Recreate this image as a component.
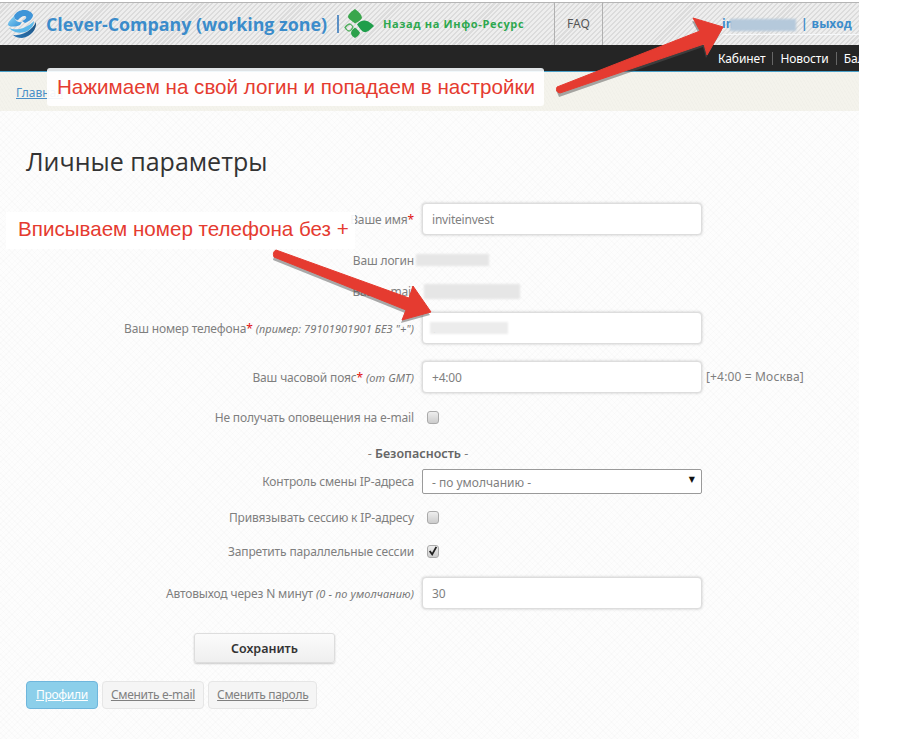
<div class="page">
  <header class="top">
    <a class="brand" href="#top">
      <svg class="logo" width="30" height="28" viewBox="0 0 30 28">
        <defs>
          <linearGradient id="sky" x1="0" y1="0" x2="1" y2="1">
            <stop offset="0" stop-color="#8fd6f5" />
            <stop offset="1" stop-color="#2f8fd6" />
          </linearGradient>
          <linearGradient id="deep" x1="0" y1="1" x2="1" y2="0">
            <stop offset="0" stop-color="#2a78b8" />
            <stop offset="1" stop-color="#1d4f7c" />
          </linearGradient>
        </defs>
        <path d="M7 6 C9 2 13 0 17 0 C21 0 25 2 26 5 C26 8 23 11 18 13 L15 11 C18 9.5 20 8 19 6.5 C17 5 13 7 11 10 C8 10 7 8 7 6 Z" fill="#3f95d8" />
        <path d="M7 6 C5 9 1 11 1 15 C3 17 8 17 13 15 L15 12 C11 13 8 11 7 6 Z" fill="url(#sky)" />
        <path d="M2 18 C9 21 19 19 27 11 C27 16 23 20 18 22 C12 24 6 22 2 18 Z" fill="#5bb8ea" />
        <path d="M29 12 C30 19 24 27 15 28 C11 28 8 27 6 25 C14 26 25 21 29 12 Z" fill="url(#deep)" />
      </svg>
      <span class="brand-name">Clever-Company (working zone)</span>
    </a>
    <span class="brand-sep"></span>
    <svg class="leaf" width="30" height="30" viewBox="0 0 30 30">
      <path d="M11 0 C15 3 18 6 18 9 C17 11 14 13 11 14.5 C8 12 4.5 10 4 8 C4 5 8 2 11 0 Z" fill="#3aa64c" />
      <path d="M13 15.5 C15 12.5 19 11 21 11.5 C25 12 28 15 30 17 C27 20 23 24 20 23 C17 22 15 18 13 15.5 Z" fill="#1f9e4b" />
      <path d="M11 18.5 C13 20 16 23 16 24 C15 26 13 28 11 29 C9 28 7 26 7 24 C7 22 9 20 11 18.5 Z" fill="#2da14c" />
      <path d="M1 18.5 C3 16 5 15 6 15 C7.5 15.5 8.5 17 9 18 C8 20 6.5 22 5 22 C3.5 22 2 20 1 18.5 Z" fill="none" stroke="#4fae5c" stroke-width="1.3" />
    </svg>
    <a class="back" href="#top">Назад на Инфо-Ресурс</a>
    <a class="faq" href="#top">FAQ</a>
    <div class="user">
      <span class="login">in</span>
      <span class="pipe">|</span>
      <a href="#top">выход</a>
    </div>
  </header>

  <nav class="dark">
    <a href="#top">Кабинет</a><a href="#top">Новости</a><a href="#top">Баланс</a>
  </nav>

  <div class="crumbs"><a href="#top">Главная</a></div>

  <main>
    <h1>Личные параметры</h1>

    <div class="row r-name">
      <label for="name">Ваше имя<b>*</b></label>
      <input id="name" value="inviteinvest" />
    </div>
    <div class="row r-text">
      <span class="lbl">Ваш логин</span><span class="val"></span>
    </div>
    <div class="row r-text">
      <span class="lbl">Ваш e-mail</span><span class="val"></span>
    </div>
    <div class="row r-phone">
      <label for="phone">Ваш номер телефона<b>*</b> <i>(пример: 79101901901 БЕЗ "+")</i></label>
      <input id="phone" value="7" />
    </div>
    <div class="row r-tz">
      <label for="tz">Ваш часовой пояс<b>*</b> <i>(от GMT)</i></label>
      <div class="with-hint">
        <input id="tz" value="+4:00" />
        <span class="hint">[+4:00 = Москва]</span>
      </div>
    </div>
    <div class="row r-check">
      <span class="lbl">Не получать оповещения на e-mail</span>
      <span class="check"></span>
    </div>
    <div class="section">- <strong>Безопасность</strong> -</div>
    <div class="row r-select">
      <span class="lbl">Контроль смены IP-адреса</span>
      <div class="select">- по умолчанию -<span class="caret">▼</span></div>
    </div>
    <div class="row r-bind">
      <span class="lbl">Привязывать сессию к IP-адресу</span>
      <span class="check"></span>
    </div>
    <div class="row r-par">
      <span class="lbl">Запретить параллельные сессии</span>
      <span class="check">
        <svg width="12" height="12" viewBox="0 0 12 12"><path d="M2 6 L5 10 L10 1" fill="none" stroke="#222" stroke-width="2.2" /></svg>
      </span>
    </div>
    <div class="row r-auto">
      <label for="auto">Автовыход через N минут <i>(0 - по умолчанию)</i></label>
      <input id="auto" value="30" />
    </div>

    <button class="save">Сохранить</button>

    <div class="tabs">
      <a class="tab active" href="#top">Профили</a>
      <a class="tab" href="#top">Сменить e-mail</a>
      <a class="tab" href="#top">Сменить пароль</a>
    </div>
  </main>

  <!-- screenshot annotations on top of the page -->
  <div class="blur b-user"></div>
  <div class="blur b-login"></div>
  <div class="blur b-mail"></div>
  <div class="blur b-phone"></div>

  <svg class="arrows" width="905" height="739" viewBox="0 0 905 739">
    <g fill="#555" opacity="0.5" transform="translate(-1 3)">
      <path d="M557 87 L700 31 L693 18 L723 27 L707 55 L704 44 L560 94 Z" />
      <path d="M276 250 L409 298 L413 286 L431 312 L402 320 L406 310 L274 257 Z" />
    </g>
    <g fill="#e53b30" stroke="#e53b30" stroke-width="1" stroke-linejoin="round">
      <path d="M557 87 L700 31 L693 18 L723 27 L707 55 L704 44 L560 93 Q555 92 557 87 Z" />
      <path d="M276 250 L409 298 L413 286 L431 312 L402 320 L406 310 L274 257 Q272 252 276 250 Z" />
    </g>
  </svg>

  <div class="note n-login">Нажимаем на свой логин и попадаем в настройки</div>
  <div class="note n-phone">Вписываем номер телефона без +</div>
</div>

<style>
  :global(body) {
    background: #fff;
    overflow: hidden;
  }

  .page {
    position: relative;
    width: 859px;
    height: 739px;
    font-family: "Noto Sans", "DejaVu Sans", sans-serif;
    font-size: 12px;
    color: #7f7f7f;
  }

  a {
    color: inherit;
  }

  .top {
    box-sizing: border-box;
    height: 45px;
    display: flex;
    align-items: stretch;
    border-top: 2px solid #fff;
    box-shadow: inset 0 1px 0 #b5b5b5;
    background: repeating-linear-gradient(135deg, #dcdcdc 0 1.5px, #eee 1.5px 3.5px);
    position: relative;
  }

  .brand {
    display: flex;
    align-items: center;
    gap: 9px;
    padding-left: 7px;
    text-decoration: none;
  }

  .logo {
    margin-top: 1px;
  }

  .brand-name {
    font-family: "Open Sans", sans-serif;
    font-weight: 700;
    font-size: 17.8px;
    color: #3b8ccb;
    white-space: nowrap;
  }

  .brand-sep {
    align-self: center;
    width: 2px;
    height: 18px;
    background: #5b8fc4;
    margin: 1px 0 0 10px;
  }

  .leaf {
    align-self: center;
    margin-left: 5px;
  }

  .back {
    align-self: center;
    margin-left: 9px;
    font-family: "Open Sans", sans-serif;
    font-weight: 700;
    font-size: 11px;
    color: #2ea84f;
    text-decoration: none;
    white-space: nowrap;
    letter-spacing: 0.65px;
  }

  .faq {
    position: absolute;
    left: 554px;
    top: 0;
    bottom: 0;
    width: 49px;
    box-sizing: border-box;
    border: solid #b0b0b0;
    border-width: 0 1px;
    display: flex;
    align-items: center;
    justify-content: center;
    color: #555;
    text-decoration: none;
  }

  .user {
    box-sizing: border-box;
    position: absolute;
    left: 722px;
    top: 14px;
    width: 137px;
    height: 19px;
    display: flex;
    gap: 4px;
    border-bottom: 1px solid #f6f8fa;
    color: #3b8ccb;
    font-family: "Open Sans", sans-serif;
    font-weight: 700;
    font-size: 12px;
    line-height: 16px;
  }

  .user a {
    text-decoration: none;
  }

  .login {
    width: 75px;
    flex: none;
  }

  .dark {
    height: 26px;
    background: #252525;
    border-bottom: 1px solid #4aa0c8;
    display: flex;
    align-items: center;
    padding-left: 718px;
    overflow: hidden;
    white-space: nowrap;
    letter-spacing: -0.1px;
  }

  .dark a {
    color: #fff;
    text-decoration: none;
    padding-right: 7px;
    margin-right: 7px;
    border-right: 1px solid #666;
    line-height: 13px;
  }

  .crumbs {
    box-sizing: border-box;
    height: 39px;
    padding: 12px 0 0 16px;
    background-color: #f4f3ec;
    background-image: repeating-linear-gradient(60deg, rgba(0, 0, 0, 0.012) 0 1px, transparent 1px 3px);
    color: #4a8fc8;
  }

  main {
    height: 628px;
    position: relative;
    background-color: #fdfdfd;
    background-image:
      repeating-linear-gradient(45deg, rgba(0, 0, 0, 0.012) 0 1px, transparent 1px 4px),
      repeating-linear-gradient(135deg, rgba(0, 0, 0, 0.012) 0 1px, transparent 1px 4px);
  }

  h1 {
    margin: 0;
    padding: 33px 0 0 26px;
    height: 57px;
    box-sizing: border-box;
    font-family: "Open Sans", sans-serif;
    font-weight: 400;
    font-size: 25px;
    line-height: 34px;
    color: #333;
  }

  .row {
    display: grid;
    grid-template-columns: 414px 280px;
    column-gap: 8px;
    align-items: center;
  }

  .row label,
  .lbl {
    text-align: right;
    white-space: nowrap;
    letter-spacing: -0.15px;
  }

  .row b {
    color: #e01010;
    font-weight: 400;
  }

  .row i {
    font-size: 11px;
    color: #777;
    letter-spacing: 0.1px;
  }

  input {
    box-sizing: border-box;
    width: 280px;
    height: 32px;
    padding: 0 9px;
    border: 1px solid #ddd;
    border-radius: 4px;
    box-shadow: 0 0 3px rgba(0, 0, 0, 0.22);
    background: #fff;
    font: inherit;
    letter-spacing: -0.2px;
    color: #7f7f7f;
    outline: none;
  }

  .r-name { margin-top: 35px; }
  .r-text { height: 31px; }
  .r-name + .r-text { margin-top: 10px; }
  .r-phone { margin-top: 5px; }
  .r-tz { margin-top: 17px; }
  .r-check { margin-top: 15px; height: 18px; }

  .with-hint {
    position: relative;
  }

  .hint {
    position: absolute;
    left: 284px;
    top: 7px;
    white-space: nowrap;
    letter-spacing: 0.15px;
  }

  .check {
    box-sizing: border-box;
    width: 12px;
    height: 13px;
    border: 1px solid #aaa;
    border-radius: 3px;
    background: linear-gradient(#eee, #ccc);
    margin-left: 5px;
    display: flex;
    align-items: center;
    justify-content: center;
  }

  .section {
    text-align: center;
    width: 836px;
    margin-top: 19px;
    line-height: 18px;
    font-size: 12.5px;
  }

  .section strong {
    font-weight: 600;
    color: #666;
  }

  .r-select { margin-top: 6px; }

  .select {
    box-sizing: border-box;
    position: relative;
    height: 25px;
    padding: 4px 9px 0;
    border: 1px solid #9a9a9a;
    border-radius: 2px;
    background: #fff;
    line-height: 18px;
  }

  .caret {
    position: absolute;
    right: 6px;
    top: 0;
    font-size: 8px;
    color: #111;
  }

  .r-bind { margin-top: 14px; height: 18px; }
  .r-par { margin-top: 16px; height: 18px; }
  .r-auto { margin-top: 17px; }

  .save {
    display: block;
    box-sizing: border-box;
    width: 141px;
    height: 30px;
    margin: 24px 0 0 194px;
    border: 1px solid #ddd;
    border-radius: 3px;
    box-shadow: 0 1px 2px rgba(0, 0, 0, 0.2);
    background: linear-gradient(#fbfbfb, #efefef);
    font: 600 12.5px "Noto Sans", sans-serif;
    color: #333;
  }

  .tabs {
    display: flex;
    gap: 4px;
    margin: 18px 0 0 26px;
    letter-spacing: -0.3px;
  }

  .tab {
    box-sizing: border-box;
    height: 28px;
    padding: 0 8px;
    line-height: 26px;
    border: 1px solid #e6e6e6;
    border-radius: 4px;
    background: #f5f5f5;
    color: #808080;
  }

  .tab.active {
    padding: 0 9px;
    background: #8ccfea;
    border-color: #6fb6dc;
    color: #fff;
  }

  .note {
    position: absolute;
    box-sizing: border-box;
    background: rgba(255, 255, 255, 0.92);
    font-family: "Liberation Sans", sans-serif;
    font-size: 20.6px;
    color: #e53b30;
    white-space: nowrap;
  }

  .n-login {
    left: 47px;
    top: 68px;
    width: 497px;
    height: 38px;
    padding: 4px 0 0 10px;
    border-top: 3px solid #dfe3e6;
    border-radius: 3px;
  }

  .n-phone {
    left: 6px;
    top: 212px;
    width: 349px;
    height: 37px;
    padding: 5px 0 0 12px;
  }

  .blur {
    position: absolute;
    filter: blur(1px);
  }

  .b-user { left: 730px; top: 19px; width: 66px; height: 12px; background: #b5c9db; }
  .b-login { left: 416px; top: 254px; width: 73px; height: 12px; background: #e6e6e6; }
  .b-mail { left: 424px; top: 284px; width: 96px; height: 15px; background: #e6e6e6; }
  .b-phone { left: 430px; top: 322px; width: 78px; height: 12px; background: #ececec; }

  .arrows {
    position: absolute;
    left: 0;
    top: 0;
    pointer-events: none;
  }
</style>
